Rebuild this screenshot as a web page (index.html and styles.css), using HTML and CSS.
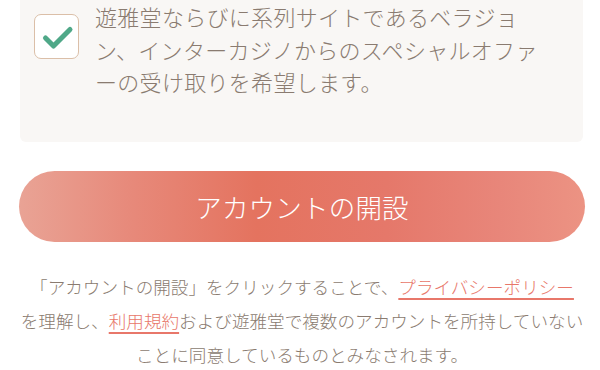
FILE: index.html
```html
<!DOCTYPE html>
<html lang="ja">
<head>
<meta charset="utf-8">
<link rel="stylesheet" href="styles.css">
</head>
<body>
<div class="page">
  <div class="optin">
    <label class="check">
      <span class="box">
        <svg viewBox="0 0 43 43" width="43" height="43"><path d="M10.5 23 L18.5 31 L35 14.5" fill="none" stroke="#4fa888" stroke-width="5" stroke-linecap="round" stroke-linejoin="round"/></svg>
      </span>
      <span class="optin-text">遊雅堂ならびに系列サイトであるベラジョン、インターカジノからのスペシャルオファーの受け取りを希望します。</span>
    </label>
  </div>
  <button class="cta">アカウントの開設</button>
  <p class="terms">「アカウントの開設」をクリックすることで、<a href="#">プライバシーポリシー</a><br>を理解し、<a href="#">利用規約</a>および遊雅堂で複数のアカウントを所持していないことに同意しているものとみなされます。</p>
</div>
</body>
</html>
```
FILE: styles.css
```css
html, body {
  margin: 0;
  padding: 0;
  background: #ffffff;
}
body {
  font-family: "Noto Sans CJK JP", "Noto Sans", sans-serif;
  font-weight: 300;
  color: #8a7b70;
}
.page {
  padding: 0 15px 0 19px;
  display: flex;
  flex-direction: column;
}
.optin {
  margin: 0 2px 0 1px;
  background: #f9f7f5;
  border-radius: 0 0 6px 6px;
  padding: 0 20px 44px 14px;
}
.check {
  display: flex;
  align-items: flex-start;
  gap: 16px;
}
.box {
  flex: none;
  width: 43px;
  height: 43px;
  margin-top: 14px;
  border: 1.5px solid #dbbfa8;
  border-radius: 7px;
  background: #ffffff;
  display: flex;
  align-items: center;
  justify-content: center;
}
.optin-text {
  font-size: 22px;
  line-height: 32.5px;
  letter-spacing: 0.3px;
  max-width: 452px;
}
.cta {
  margin-top: 29px;
  height: 71px;
  border: none;
  border-radius: 36px;
  background: linear-gradient(90deg, #e9a395 0%, #e7897a 20%, #e4735f 42%, #e5786a 65%, #e8867a 85%, #ec9383 100%);
  color: #ffffff;
  font-family: "Noto Sans CJK JP", "Noto Sans", sans-serif;
  font-weight: 300;
  font-size: 26.5px;
  letter-spacing: 0.2px;
  padding: 0;
}
.terms {
  margin: 28px -4px 0 -4px;
  font-size: 17.6px;
  line-height: 34px;
  text-align: center;
}
.terms a {
  color: #e8776a;
  text-decoration: underline;
  text-underline-offset: 4px;
  text-decoration-thickness: 1.5px;
}
```
